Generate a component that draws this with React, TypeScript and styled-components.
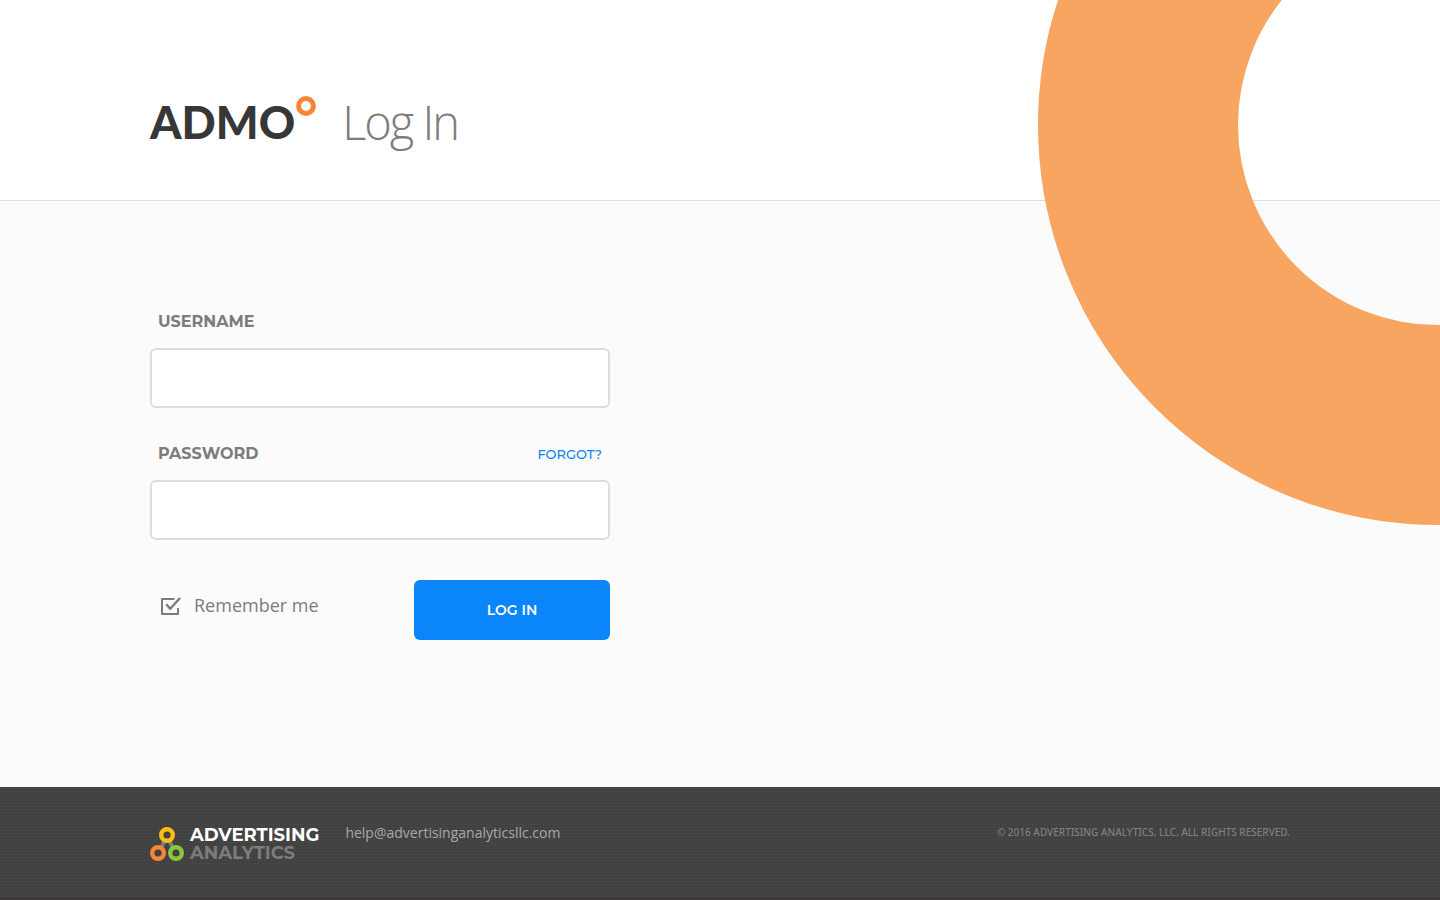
import React, { useState } from 'react';
import styled, { createGlobalStyle } from 'styled-components';

const display = '"Montserrat", "Inter", "Liberation Sans", sans-serif';
const text = '"Open Sans", "Noto Sans", sans-serif';

const GlobalStyle = createGlobalStyle`
  *, *::before, *::after { box-sizing: border-box; }
  body { margin: 0; background: #fbfbfb; font-family: ${text}; color: #7c7c7c; }
`;

const Page = styled.div`
  position: relative;
  display: flex;
  flex-direction: column;
  min-height: 100vh;
  overflow: hidden;
`;

const Ring = styled.div`
  position: absolute;
  top: -275px;
  right: -398px;
  width: 800px;
  height: 800px;
  border: 200px solid #f8a059;
  border-radius: 50%;
  opacity: 0.95;
  pointer-events: none;
`;

const Container = styled.div`
  width: 100%;
  max-width: 1180px;
  margin: 0 auto;
  padding: 0 20px;
`;

const Header = styled.header`
  background: #fff;
  border-bottom: 1px solid #dfdfdf;
  padding: 88px 0 44px;
`;

const Brand = styled(Container)`
  display: flex;
  align-items: flex-start;
`;

const Wordmark = styled.span`
  font: 900 45px/68px "Lato", ${display};
  color: #373737;
`;

const Degree = styled.svg`
  width: 20px;
  height: 20px;
  margin: 8px 26px 0 1px;
`;

const Title = styled.h1`
  margin: 0;
  font: 300 47px/68px ${text};
  letter-spacing: -2px;
  color: #7c7c7c;
`;

const Main = styled.main`
  flex: 1;
  padding: 107px 0 100px;
`;

const Form = styled.form`
  max-width: 460px;
`;

const Field = styled.div`
  margin-bottom: 32px;
`;

const FieldHead = styled.div`
  display: flex;
  justify-content: space-between;
  align-items: center;
  padding: 0 8px;
  height: 28px;
  margin-bottom: 12px;
`;

const Label = styled.label`
  font: 700 16px/28px ${display};
  color: #7c7c7c;
`;

const Forgot = styled.a`
  font: 500 13px/28px ${display};
  color: #0b85fa;
  text-decoration: none;
`;

const Input = styled.input`
  display: block;
  width: 100%;
  height: 60px;
  padding: 0 16px;
  border: 2px solid #dddddd;
  border-radius: 6px;
  background: #fff;
  font: 400 18px/24px ${text};
  color: #373737;
`;

const Actions = styled.div`
  display: flex;
  justify-content: space-between;
  align-items: flex-start;
  padding-top: 8px;
`;

const Remember = styled.label`
  display: flex;
  align-items: center;
  gap: 12px;
  padding: 12px 0 0 10px;
  font: 500 18px/26px ${text};
  color: #7c7c7c;
  cursor: pointer;
`;

const Check = styled.span`
  display: grid;
  width: 22px;
  height: 20px;
  & > * { grid-area: 1 / 1; }
`;

const CheckInput = styled.input`
  appearance: none;
  width: 22px;
  height: 20px;
  margin: 0;
  cursor: pointer;
`;

const CheckIcon = styled.svg`
  width: 22px;
  height: 20px;
  pointer-events: none;
`;

const Submit = styled.button`
  width: 196px;
  height: 60px;
  border: 0;
  border-radius: 6px;
  background: #0b85fa;
  color: #fff;
  font: 600 14px/20px ${display};
  cursor: pointer;
`;

const Footer = styled.footer`
  background-color: #404040;
  background-image:
    repeating-linear-gradient(0deg, rgba(255, 255, 255, 0.025) 0 1px, transparent 1px 3px),
    repeating-linear-gradient(90deg, rgba(255, 255, 255, 0.025) 0 1px, transparent 1px 3px);
  border-bottom: 3px solid #3d393b;
  padding: 37px 0 35px;
`;

const FooterRow = styled(Container)`
  display: flex;
  align-items: flex-start;
`;

const Company = styled.div`
  display: flex;
  gap: 6px;
  margin-right: 26px;
`;

const CompanyMark = styled.svg`
  width: 34px;
  height: 34px;
  margin-top: 3px;
`;

const CompanyName = styled.div`
  font: 700 18px/18px ${display};
  padding-top: 2px;
`;

const NameLine = styled.div<{ $tone: string }>`
  color: ${(p) => p.$tone};
`;

const Mail = styled.a`
  font: 400 14px/18px ${text};
  color: #a9a9a9;
  text-decoration: none;
`;

const Copyright = styled.p`
  margin: 0 0 0 auto;
  font: 500 10px/16px "Noto Sans", sans-serif;
  color: #7f7f7f;
`;

export default function App() {
  const [remember, setRemember] = useState(true);
  return (
    <>
      <GlobalStyle />
      <Page>
        <Header>
          <Brand>
            <Wordmark>ADMO</Wordmark>
            <Degree viewBox="0 0 20 20" aria-hidden="true">
              <circle cx="10" cy="10" r="7.4" fill="none" stroke="#f98634" strokeWidth="5" />
            </Degree>
            <Title>Log In</Title>
          </Brand>
        </Header>
        <Main>
          <Container>
            <Form onSubmit={(e) => e.preventDefault()}>
              <Field>
                <FieldHead>
                  <Label htmlFor="username">USERNAME</Label>
                </FieldHead>
                <Input id="username" type="text" autoComplete="username" />
              </Field>
              <Field>
                <FieldHead>
                  <Label htmlFor="password">PASSWORD</Label>
                  <Forgot href="#forgot">FORGOT?</Forgot>
                </FieldHead>
                <Input id="password" type="password" autoComplete="current-password" />
              </Field>
              <Actions>
                <Remember htmlFor="remember">
                  <Check>
                    <CheckInput
                      id="remember"
                      type="checkbox"
                      checked={remember}
                      onChange={(e) => setRemember(e.target.checked)}
                    />
                    <CheckIcon viewBox="0 0 22 20" fill="none" stroke="#7c7c7c" strokeWidth="2" aria-hidden="true">
                      <path d="M14.5 4H2V19H18V13" strokeLinejoin="round" />
                      {remember && <path d="M6.3 9.3L10.2 13.8L20 3" strokeWidth="2.4" />}
                    </CheckIcon>
                  </Check>
                  Remember me
                </Remember>
                <Submit type="submit">LOG IN</Submit>
              </Actions>
            </Form>
          </Container>
        </Main>
        <Footer>
          <FooterRow>
            <Company>
              <CompanyMark viewBox="0 0 34 34" fill="none" aria-hidden="true">
                <path d="M9 26L17 8L25 26" stroke="#7c7c7c" strokeWidth="4" />
                <g fill="#414141" strokeWidth="4.4">
                  <circle cx="17" cy="8" r="5.8" stroke="#fdc010" />
                  <circle cx="8" cy="26" r="5.8" stroke="#f98634" />
                  <circle cx="26" cy="26" r="5.8" stroke="#8dc63f" />
                </g>
              </CompanyMark>
              <CompanyName>
                <NameLine $tone="#ffffff">ADVERTISING</NameLine>
                <NameLine $tone="#7c7c7c">ANALYTICS</NameLine>
              </CompanyName>
            </Company>
            <Mail href="mailto:help@advertisinganalyticsllc.com">help@advertisinganalyticsllc.com</Mail>
            <Copyright>© 2016 ADVERTISING ANALYTICS, LLC. ALL RIGHTS RESERVED.</Copyright>
          </FooterRow>
        </Footer>
        <Ring />
      </Page>
    </>
  );
}
